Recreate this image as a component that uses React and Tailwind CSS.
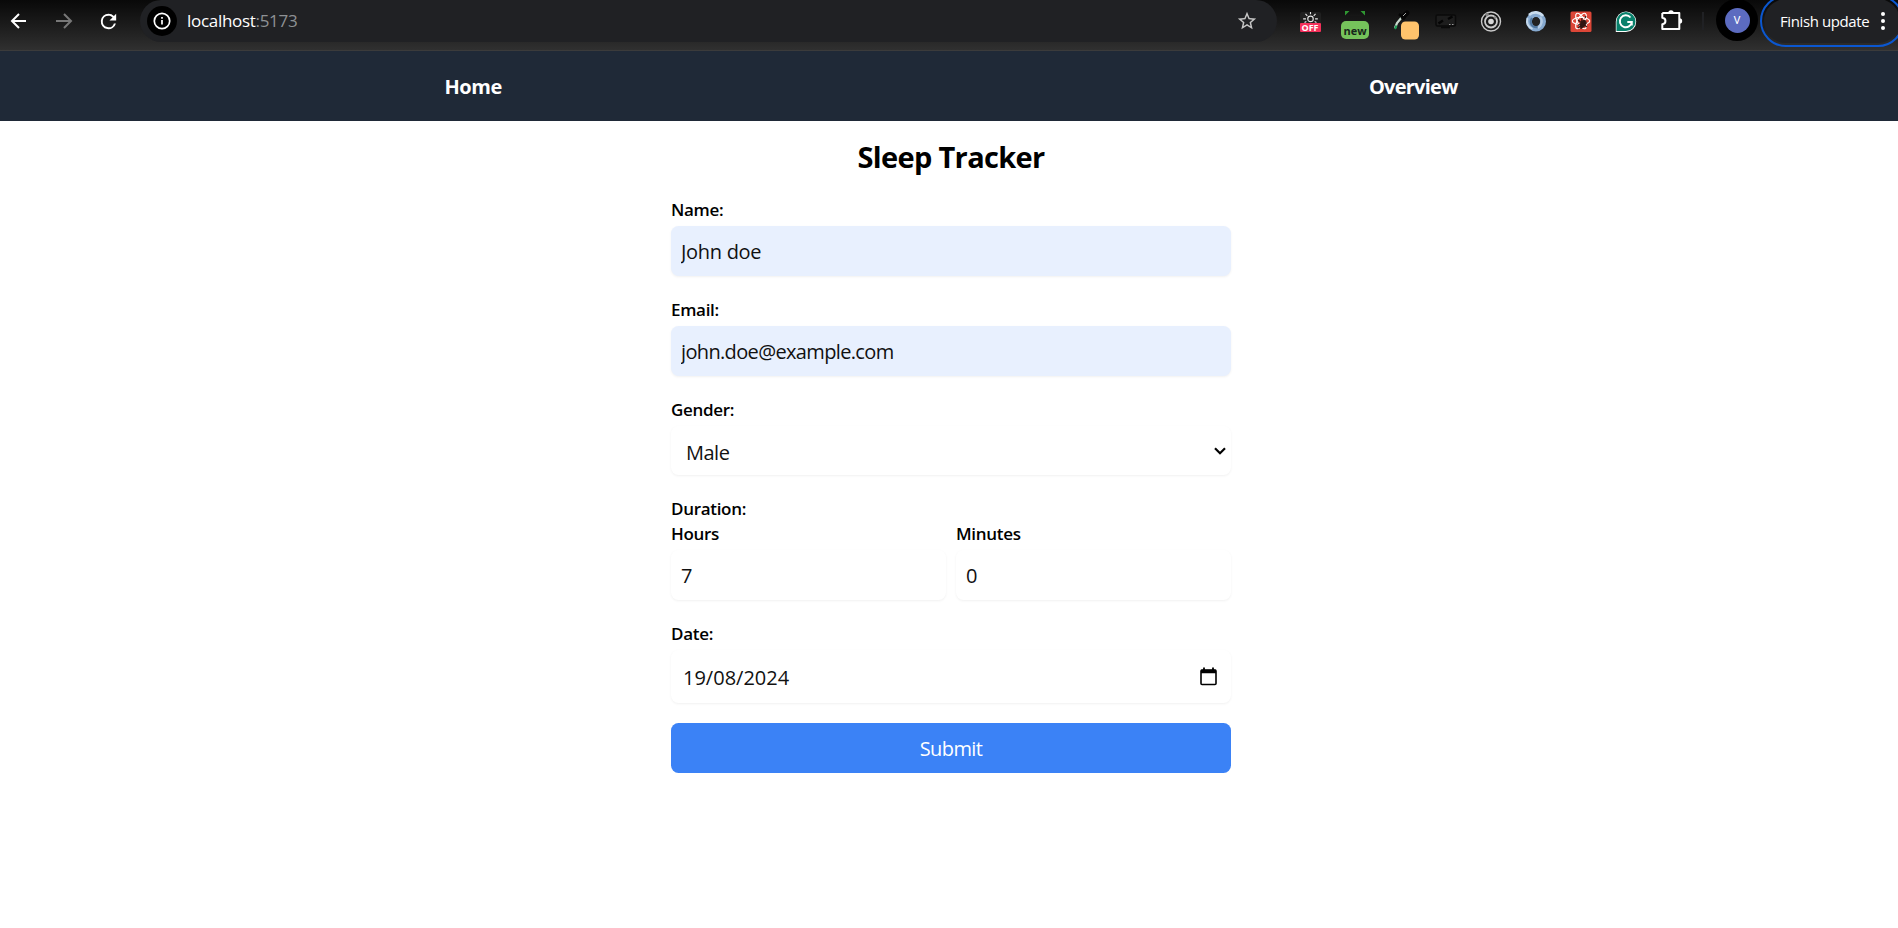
import React from 'react';

function BrowserBar() {
  return (
    <div className="flex h-[51px] w-[1898px] items-start overflow-hidden border-b border-[#3b3b3b] bg-gradient-to-b from-[#090909] to-[#303030] text-white">
      <div className="flex h-[42px] w-[140px] shrink-0 items-center">
        <svg className="ml-[7px] h-6 w-6" viewBox="0 0 24 24" fill="none" stroke="#fff" strokeWidth="2">
          <path d="M19 12H5.5M12 5l-7 7 7 7" />
        </svg>
        <svg className="ml-[21px] h-6 w-6" viewBox="0 0 24 24" fill="none" stroke="#777" strokeWidth="2">
          <path d="M4 12h14.500M12 5l7 7-7 7" />
        </svg>
        <svg className="ml-[21px] h-[23px] w-[23px]" viewBox="0 0 24 24" fill="#fff">
          <path d="M17.65 6.35A7.96 7.96 0 0 0 12 4a8 8 0 1 0 7.73 10h-2.080A6 6 0 1 1 12 6c1.660 0 3.140.69 4.220 1.780L13 11h7V4z" />
        </svg>
      </div>

      <div className="flex h-[42px] w-[1137px] shrink-0 items-center rounded-full bg-[#202124]">
        <div className="ml-[7px] flex h-[30px] w-[30px] items-center justify-center rounded-full bg-black">
          <svg className="h-[18px] w-[18px]" viewBox="0 0 18 18" fill="none" stroke="#fff" strokeWidth="1.7">
            <circle cx="9" cy="9" r="7.700" />
            <path d="M9 8v4.500M9 5v1.700" />
          </svg>
        </div>
        <span className="ml-[10px] text-[17px] leading-[42px] tracking-[-0.3px]">
          localhost<span className="text-[#8e9194]">:5173</span>
        </span>
        <svg className="mr-[19px] ml-auto h-[22px] w-[22px]" viewBox="0 0 24 24" fill="#c7c7c7">
          <path d="M22 9.240l-7.190-.62L12 2 9.190 8.630 2 9.240l5.460 4.730L5.820 21 12 17.270 18.180 21l-1.630-7.030L22 9.240zM12 15.400l-3.760 2.270 1-4.280-3.320-2.880 4.380-.38L12 6.100l1.710 4.040 4.380.38-3.320 2.880 1 4.280L12 15.400z" />
        </svg>
      </div>

      <div className="flex h-[42px] w-[439px] shrink-0 items-start pl-[10.500px]">
        <div className="flex w-[45px] shrink-0 justify-center pt-[12px]">
          <div className="flex h-5 w-[21px] flex-col rounded-[2px] bg-[#202020]">
            <svg className="h-[11px] w-[21px] shrink-0" viewBox="0 0 21 12" fill="none" stroke="#e8e8e8" strokeWidth="1.200">
              <circle cx="10.500" cy="7.500" r="3" />
              <path d="M10.500 0v2.500M5 2l2 2.300M16 2l-2 2.300M2.500 7.500h3M15.500 7.500h3M4 11.500l2-1.200M17 11.500l-2-1.200" />
            </svg>
            <span className="h-[9px] rounded-[1px] bg-[#f4305a] text-center text-[9px] leading-[9px] font-bold">OFF</span>
          </div>
        </div>
        <div className="flex w-[45px] shrink-0 flex-col items-center pt-[11px]">
          <svg className="h-[10px] w-[22px]" viewBox="0 0 22 10">
            <path d="M1 0h4.500L1 4.500zM21 0h-4.500L21 4.500z" fill="#2f9632" />
            <path d="M4 9V4.500h14V9" fill="none" stroke="#161616" strokeWidth="2" />
          </svg>
          <span className="h-[18px] w-[28px] rounded-[5px] bg-[#75c35b] text-center text-[11px] leading-[19px] font-bold text-[#17271a]">new</span>
        </div>
        <svg className="h-[42px] w-[45px] shrink-0" viewBox="0 0 45 42">
          <path d="M17 28l2-5 5-6" fill="none" stroke="#c9d9ce" strokeWidth="2.200" />
          <path d="M17 29l1.500-3.500" stroke="#1a9c52" strokeWidth="2" />
          <path d="M21 14l6 5" stroke="#050505" strokeWidth="2.500" />
          <path d="M25 17l4-4" stroke="#050505" strokeWidth="5" strokeLinecap="round" />
          <path d="M25 16l3-3" stroke="#a5a5a5" strokeWidth="1" />
          <rect x="23" y="21.500" width="18" height="18" rx="4.500" fill="#ffc36c" />
        </svg>
        <svg className="h-[42px] w-[45px] shrink-0" viewBox="0 0 45 42" fill="none">
          <rect x="13" y="15" width="19.500" height="11" rx="1.500" fill="#1d1d1d" stroke="#0a0a0a" strokeWidth="1.500" />
          <path d="M18 27.500h9" stroke="#0a0a0a" strokeWidth="1.500" />
          <path d="M15.500 23.500l4.500-3M25 19l4.500-2.500" stroke="#050505" strokeWidth="2.500" />
          <path d="M26 24.500h1.500M29 24.500h1.500" stroke="#999" strokeWidth="1" />
        </svg>
        <svg className="h-[42px] w-[45px] shrink-0" viewBox="0 0 45 42" fill="none" stroke="#c9c9c9">
          <circle cx="23" cy="21.500" r="9.500" strokeWidth="1.400" />
          <circle cx="23" cy="21.500" r="6" strokeWidth="1.800" />
          <circle cx="23" cy="21.500" r="2.800" fill="#d6d6d6" stroke="none" />
          <circle cx="19" cy="14.500" r="1.800" fill="#858585" stroke="none" />
          <circle cx="27" cy="17.500" r="1.300" fill="#858585" stroke="none" />
        </svg>
        <svg className="h-[42px] w-[45px] shrink-0" viewBox="0 0 45 42" fill="none">
          <circle cx="23" cy="21.500" r="7" stroke="#86a9cf" strokeWidth="6" />
          <path d="M16 15a9.500 9.500 0 0 1 14 1" stroke="#c9dcee" strokeWidth="2.600" />
          <path d="M19 18c-3 5 0 10 6 9" stroke="#52789f" strokeWidth="2.200" />
          <path d="M27 17c3 3 2 8-2 11" stroke="#b4cbe3" strokeWidth="2.200" />
          <path d="M14.500 18c-1.500 5 1 9 5 11" stroke="#c4d8ea" strokeWidth="1.800" />
          <ellipse cx="23" cy="21.500" rx="3.400" ry="4.600" fill="#222" />
        </svg>
        <svg className="h-[42px] w-[45px] shrink-0" viewBox="0 0 45 42" fill="none">
          <rect x="12.500" y="11.500" width="21" height="20.500" rx="1.500" fill="#dc4637" />
          <g stroke="#fff" strokeWidth="1.200">
            <ellipse cx="23" cy="21" rx="8.700" ry="3.600" />
            <ellipse cx="23" cy="21" rx="8.700" ry="3.600" transform="rotate(60 23 21)" />
            <ellipse cx="23" cy="21" rx="8.700" ry="3.600" transform="rotate(120 23 21)" />
          </g>
          <g stroke="#301512">
            <ellipse cx="25" cy="24" rx="2.300" ry="4" transform="rotate(28 25 24)" fill="#301512" />
            <path d="M20 20l9 7M20 25l9-2M24 18l-1 11M27 18l1-2M20 28l3-2" strokeWidth="1.200" />
          </g>
        </svg>
        <svg className="h-[42px] w-[45px] shrink-0" viewBox="0 0 45 42" fill="none">
          <path d="M12.800 32V21.700a10.200 10.200 0 1 1 10.200 10.300z" fill="#fff" />
          <path d="M13.500 31V21.700a9.500 9.500 0 1 1 9.500 9.300z" fill="#08806b" />
          <path d="M27.500 17.500a6 6 0 1 0 1.300 4.500h-4.500M28.800 21v4.500" stroke="#fff" strokeWidth="1.900" />
        </svg>
        <svg className="h-[42px] w-[45px] shrink-0" viewBox="0 0 45 42" fill="none">
          <path d="M14.300 13h17v5.600M31.300 23.500V29h-17v-4.800c4.200-.3 4.200-6.200 0-6.500V13M31.300 18v6" stroke="#fff" strokeWidth="2" strokeLinejoin="round" />
          <path d="M20.300 13a2.700 2.700 0 0 1 5.400 0zM31.500 18.300a2.700 2.700 0 0 1 0 5.400z" fill="#fff" />
        </svg>
        <div className="mt-[12px] ml-[9px] h-[18px] w-[2px] bg-[#202124]" />
      </div>

      <div className="-mt-[1px] flex h-[42px] w-[42px] shrink-0 items-center justify-center rounded-full bg-black">
        <span className="h-[25px] w-[25px] rounded-full bg-[#5c6bc0] text-center font-['Roboto',sans-serif] text-[11px] leading-[25px]">V</span>
      </div>
      <div className="-mt-[5px] ml-[2px] h-[52px] w-[144px] shrink-0 rounded-full border-2 border-[#0b57d0] p-[2px]">
        <div className="flex h-[44px] items-center rounded-full bg-[#202124]">
          <span className="ml-[16px] w-[92px] shrink-0 text-[15px] tracking-[-0.4px] whitespace-nowrap">Finish update</span>
          <svg className="ml-[8px] h-[20px] w-[6px] shrink-0" viewBox="0 0 6 20" fill="#fff">
            <circle cx="3" cy="3" r="2" />
            <circle cx="3" cy="10" r="2" />
            <circle cx="3" cy="17" r="2" />
          </svg>
        </div>
      </div>
    </div>
  );
}

const labelClass = 'block text-[17px] font-semibold tracking-[-0.3px]';
const fieldClass =
  'block w-full rounded-[7.500px] px-[10px] text-[20px] text-[#111] shadow-[0_1px_2.500px_rgba(0,0,0,0.06)] outline-none';

function Field({ id, label, value, tint, spacing }) {
  return (
    <div className="flex-1">
      <label htmlFor={id} className={`${labelClass} mb-[2px] leading-[28px]`}>{label}</label>
      <input
        id={id}
        defaultValue={value}
        className={`${fieldClass} h-[50px] pt-[1px] ${tint ? 'bg-[#e8f0fe]' : 'bg-white'} ${spacing}`}
      />
    </div>
  );
}

export default function App() {
  return (
    <div className="h-[928px] w-full overflow-hidden bg-white font-['Open_Sans','Noto_Sans',sans-serif] text-black">
      <BrowserBar />
      <div className="w-[1902px]">
        <nav className="flex h-[70px] items-center justify-around bg-[#1f2937] px-[10px] pt-[2px] text-[20px] font-bold text-white">
          <a className="ml-px tracking-[-0.400px]">Home</a>
          <a className="mr-px tracking-[-0.750px]">Overview</a>
        </nav>
        <main className="mx-auto w-[560px] pt-[16px]">
          <h1 className="mb-[19px] text-center text-[29px] leading-[40px] font-bold tracking-[-0.650px]">Sleep Tracker</h1>
          <form className="flex flex-col gap-5">
            <Field id="name" label="Name:" value="John doe" tint spacing="tracking-[-0.300px]" />
            <Field id="email" label="Email:" value="john.doe@example.com" tint spacing="tracking-[-0.650px]" />
            <div>
              <label htmlFor="gender" className={`${labelClass} mb-[2px] leading-[28px]`}>Gender:</label>
              <div className={`${fieldClass} flex h-[49px] items-center justify-between bg-white`}>
                <select id="gender" className="grow appearance-none bg-transparent pt-[4px] pl-[5px] tracking-[-0.500px] outline-none">
                  <option>Male</option>
                </select>
                <svg className="-mr-[5px] h-[8px] w-[12px]" viewBox="0 0 12 8" fill="none" stroke="#000" strokeWidth="2.200">
                  <path d="M1 1.200l5 5 5-5" />
                </svg>
              </div>
            </div>
            <div>
              <span className={`${labelClass} h-[25px] leading-[28px]`}>Duration:</span>
              <div className="flex gap-[10px]">
                <Field id="hours" label="Hours" value="7" spacing="" />
                <Field id="minutes" label="Minutes" value="0" spacing="" />
              </div>
            </div>
            <div>
              <label htmlFor="date" className={`${labelClass} mb-[2px] leading-[28px]`}>Date:</label>
              <div className={`${fieldClass} flex h-[53px] items-center justify-between bg-white`}>
                <span id="date" className="pt-[2px] pl-[2px]">19/08/2024</span>
                <svg className="mr-[4px] h-[19px] w-[17px]" viewBox="0 0 17 19" fill="none" stroke="#000">
                  <rect x="1" y="3" width="15" height="14.500" rx="1" strokeWidth="1.600" />
                  <path d="M1 4.500h15" strokeWidth="3.500" />
                  <path d="M4 0.500v3M13 0.500v3" strokeWidth="1.800" />
                </svg>
              </div>
            </div>
            <button type="button" className="h-[50px] rounded-[7.500px] bg-[#3b82f6] pt-[2px] text-[20px] tracking-[-0.600px] text-white">Submit</button>
          </form>
        </main>
      </div>
    </div>
  );
}
